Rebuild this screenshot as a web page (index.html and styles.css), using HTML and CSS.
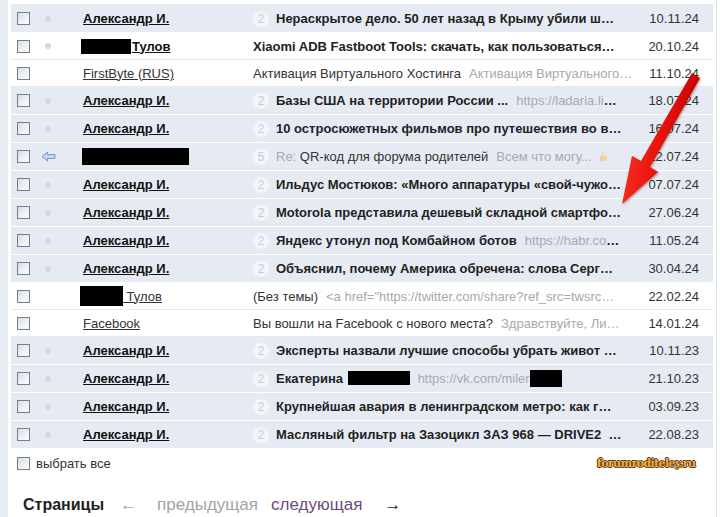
FILE: index.html
```html
<!DOCTYPE html>
<html lang="ru">
<head>
    <meta charset="UTF-8">
    <title>Входящие</title>
    <link rel="stylesheet" href="styles.css">
</head>
<body>
<div class="page">
    <div class="list">
        <div class="row thread">
            <span class="check"></span><span class="mark"><i class="dot"></i></span>
            <span class="from"><a>Александр И.</a></span>
            <span class="subj"><b class="count">2</b><span class="text">Нераскрытое дело. 50 лет назад в Крыму убили ш…</span></span>
            <span class="date">10.11.24</span>
        </div>
        <div class="row plain unread">
            <span class="check"></span><span class="mark"><i class="dot"></i></span>
            <span class="from"><a><span class="hide hide-a"></span>Тулов</a></span>
            <span class="subj"><span class="text">Xiaomi ADB Fastboot Tools: скачать, как пользоваться…</span></span>
            <span class="date">20.10.24</span>
        </div>
        <div class="row plain">
            <span class="check"></span><span class="mark"></span>
            <span class="from"><a class="light">FirstByte (RUS)</a></span>
            <span class="subj"><span class="text"><span class="topic">Активация Виртуального Хостинга</span><span class="snip">Активация Виртуального…</span></span></span>
            <span class="date">11.10.24</span>
        </div>
        <div class="row thread">
            <span class="check"></span><span class="mark"><i class="dot"></i></span>
            <span class="from"><a>Александр И.</a></span>
            <span class="subj"><b class="count">2</b><span class="text">Базы США на территории России ...<span class="snip">https://ladaria.li</span>…</span></span>
            <span class="date">18.07.24</span>
        </div>
        <div class="row thread">
            <span class="check"></span><span class="mark"><i class="dot"></i></span>
            <span class="from"><a>Александр И.</a></span>
            <span class="subj"><b class="count">2</b><span class="text">10 остросюжетных фильмов про путешествия во в…</span></span>
            <span class="date">16.07.24</span>
        </div>
        <div class="row thread read">
            <span class="check"></span><span class="mark"><svg class="reply" width="15" height="11" viewBox="0 0 15 11"><path d="M1 5.5 L6.5 1 L6.5 3.5 L14 3.5 L14 7.5 L6.5 7.5 L6.5 10 Z" fill="#c6d3f2" stroke="#7b94d6" stroke-width="1"/></svg></span>
            <span class="from"><span class="hide hide-b"></span></span>
            <span class="subj"><b class="count">5</b><span class="text"><span class="re">Re:</span> <span class="topic">QR-код для форума родителей</span><span class="snip">Всем что могу...</span><svg class="emo" width="10" height="11" viewBox="0 0 10 11"><path d="M2 10 L2 5 L4 5 L4 1.5 Q5 0.5 5.5 2 L5.5 5 L8.5 5 Q9.5 5.5 9 7 L8 10 Z" fill="#f7cf97"/></svg></span></span>
            <span class="date">12.07.24</span>
        </div>
        <div class="row thread">
            <span class="check"></span><span class="mark"><i class="dot"></i></span>
            <span class="from"><a>Александр И.</a></span>
            <span class="subj"><b class="count">2</b><span class="text">Ильдус Мостюков: «Много аппаратуры «свой-чужо…</span></span>
            <span class="date">07.07.24</span>
        </div>
        <div class="row thread">
            <span class="check"></span><span class="mark"><i class="dot"></i></span>
            <span class="from"><a>Александр И.</a></span>
            <span class="subj"><b class="count">2</b><span class="text">Motorola представила дешевый складной смартфо…</span></span>
            <span class="date">27.06.24</span>
        </div>
        <div class="row thread">
            <span class="check"></span><span class="mark"><i class="dot"></i></span>
            <span class="from"><a>Александр И.</a></span>
            <span class="subj"><b class="count">2</b><span class="text">Яндекс утонул под Комбайном ботов<span class="snip">https://habr.co</span>…</span></span>
            <span class="date">11.05.24</span>
        </div>
        <div class="row thread">
            <span class="check"></span><span class="mark"><i class="dot"></i></span>
            <span class="from"><a>Александр И.</a></span>
            <span class="subj"><b class="count">2</b><span class="text">Объяснил, почему Америка обречена: слова Серг…</span></span>
            <span class="date">30.04.24</span>
        </div>
        <div class="row plain">
            <span class="check"></span><span class="mark"></span>
            <span class="from"><a class="light"><span class="hide hide-c"></span>&nbsp;Тулов</a></span>
            <span class="subj"><span class="text"><span class="topic">(Без темы)</span><span class="snip">&lt;a href="https://twitter.com/share?ref_src=twsrc…</span></span></span>
            <span class="date">22.02.24</span>
        </div>
        <div class="row plain">
            <span class="check"></span><span class="mark"></span>
            <span class="from"><a class="light">Facebook</a></span>
            <span class="subj"><span class="text"><span class="topic">Вы вошли на Facebook с нового места?</span><span class="snip">Здравствуйте, Ли…</span></span></span>
            <span class="date">14.01.24</span>
        </div>
        <div class="row thread">
            <span class="check"></span><span class="mark"><i class="dot"></i></span>
            <span class="from"><a>Александр И.</a></span>
            <span class="subj"><b class="count">2</b><span class="text">Эксперты назвали лучшие способы убрать живот …</span></span>
            <span class="date">10.11.23</span>
        </div>
        <div class="row thread">
            <span class="check"></span><span class="mark"><i class="dot"></i></span>
            <span class="from"><a>Александр И.</a></span>
            <span class="subj"><b class="count">2</b><span class="text">Екатерина <span class="hide hide-d"></span><span class="snip">https://vk.com/miler</span><span class="hide hide-e"></span></span></span>
            <span class="date">21.10.23</span>
        </div>
        <div class="row thread">
            <span class="check"></span><span class="mark"><i class="dot"></i></span>
            <span class="from"><a>Александр И.</a></span>
            <span class="subj"><b class="count">2</b><span class="text">Крупнейшая авария в ленинградском метро: как г…</span></span>
            <span class="date">03.09.23</span>
        </div>
        <div class="row thread">
            <span class="check"></span><span class="mark"><i class="dot"></i></span>
            <span class="from"><a>Александр И.</a></span>
            <span class="subj"><b class="count">2</b><span class="text">Масляный фильтр на Зазоцикл ЗАЗ 968 — DRIVE2 &nbsp;…</span></span>
            <span class="date">22.08.23</span>
        </div>
    </div>

    <div class="select-all">
        <span class="check"></span>
        <span>выбрать все</span>
    </div>

    <div class="pager">
        <b>Страницы</b>
        <span class="arrow off">←</span>
        <span class="off">предыдущая</span>
        <a class="next">следующая</a>
        <span class="arrow">→</span>
    </div>

    <div class="stamp">forumroditeley.ru</div>

    <svg class="pointer" width="720" height="517" viewBox="0 0 720 517">
        <defs>
            <linearGradient id="red" x1="0" y1="0" x2="1" y2="0.3">
                <stop offset="0" stop-color="#ff3b2a"/>
                <stop offset="0.6" stop-color="#e8120c"/>
                <stop offset="1" stop-color="#b80000"/>
            </linearGradient>
        </defs>
        <polygon points="692,73 700,78 650,167 658,172 622,204 632,156 641,161" fill="url(#red)"/>
    </svg>
</div>
</body>
</html>
```

FILE: styles.css
```css
* {
    margin: 0;
    padding: 0;
    box-sizing: border-box;
}

body {
    font-family: "Liberation Sans", Arial, sans-serif;
    font-size: 13px;
    color: #333;
    background: #fff;
}

.page {
    position: relative;
    width: 717px;
    height: 517px;
    border-left: 8px solid #e7ecf3;
    border-right: 1px solid #dfe4ec;
    padding: 4px 3px 0 3px;
}

.list {
    border-top: 1px solid #e8ecf1;
}

/* one message */
.row {
    display: flex;
    align-items: center;
    padding-left: 6px;
    white-space: nowrap;
}

.row.thread {
    height: 28px;
    background: #e6ebf3;
    border-bottom: 1px solid #fff;
}

.row.plain {
    height: 27px;
    background: #fff;
    border-bottom: 1px solid #e6eaf0;
}

.check {
    flex: none;
    width: 13px;
    height: 13px;
    margin-right: 6px;
    border: 1px solid #6f8190;
    background: linear-gradient(135deg, #d9dadc 0%, #eeeff0 50%, #fbfbfb 100%);
}

.mark {
    flex: none;
    width: 24px;
    display: flex;
    justify-content: center;
    align-items: center;
}

.dot {
    width: 6px;
    height: 6px;
    border-radius: 50%;
    background: #d3d8df;
}

.from {
    flex: none;
    width: 193px;
    padding-left: 23px;
    display: flex;
    align-items: center;
}

.from a {
    color: #111;
    font-weight: bold;
    text-decoration: underline;
    display: flex;
    align-items: center;
}

.from a.light {
    font-weight: normal;
    color: #333;
}

.hide {
    display: inline-block;
    background: #000;
}

.hide-a { width: 50px; height: 15px; margin-left: -2px; margin-right: 1px; }
.hide-b { width: 107px; height: 17px; margin-left: -1px; }
.hide-c { width: 43px; height: 20px; margin-left: -3px; }
.hide-d { width: 62px; height: 14px; vertical-align: -2px; margin-left: 1px; }
.hide-e { width: 32px; height: 17px; vertical-align: -4px; }

.subj {
    flex: none;
    width: 375px;
    display: flex;
    align-items: center;
}

.count {
    flex: none;
    width: 16px;
    height: 16px;
    margin-right: 7px;
    border-radius: 50%;
    background: #f3f5f9;
    color: #c8ccd3;
    font-weight: normal;
    font-size: 12px;
    line-height: 16px;
    text-align: center;
}

.text {
    flex: 1;
    min-width: 0;
    font-weight: bold;
    color: #222;
}

.plain .text, .read .text {
    font-weight: normal;
    color: #a6a9ad;
}

.plain.unread .text {
    font-weight: bold;
    color: #222;
}

.topic {
    color: #333;
}

.re {
    color: #a6a9ad;
}

.snip {
    color: #a6a9ad;
    font-weight: normal;
    padding-left: 8px;
}

.emo {
    margin-left: 6px;
    vertical-align: -1px;
}

.date {
    flex: none;
    width: 85px;
    padding-right: 14px;
    text-align: right;
    color: #333;
}

.select-all {
    display: flex;
    align-items: center;
    margin-top: 7px;
    padding-left: 6px;
    color: #333;
}

.select-all .check {
    margin-right: 6px;
}

.pager {
    display: flex;
    align-items: baseline;
    margin-top: 24px;
    padding-left: 12px;
    font-size: 17px;
    color: #222;
}

.pager b {
    font-size: 16px;
    margin-right: 16px;
}

.pager .off {
    color: #a3a3a3;
}

.pager .arrow {
    margin-right: 20px;
}

.pager .next {
    color: #6b4a7c;
    margin-left: 13px;
    margin-right: 22px;
}

/* watermark over the page */
.stamp {
    position: absolute;
    left: 589px;
    top: 457px;
    font-family: "DejaVu Serif", serif;
    font-weight: bold;
    font-size: 11px;
    letter-spacing: -0.6px;
    color: #f2b13c;
    text-shadow: 1px 0 0 #5a3410, -1px 0 0 #5a3410, 0 1px 0 #5a3410, 0 -1px 0 #5a3410;
}

.pointer {
    position: absolute;
    left: -8px;
    top: 0;
    pointer-events: none;
    filter: drop-shadow(1px 1px 1px rgba(80, 0, 0, 0.4));
}
```
